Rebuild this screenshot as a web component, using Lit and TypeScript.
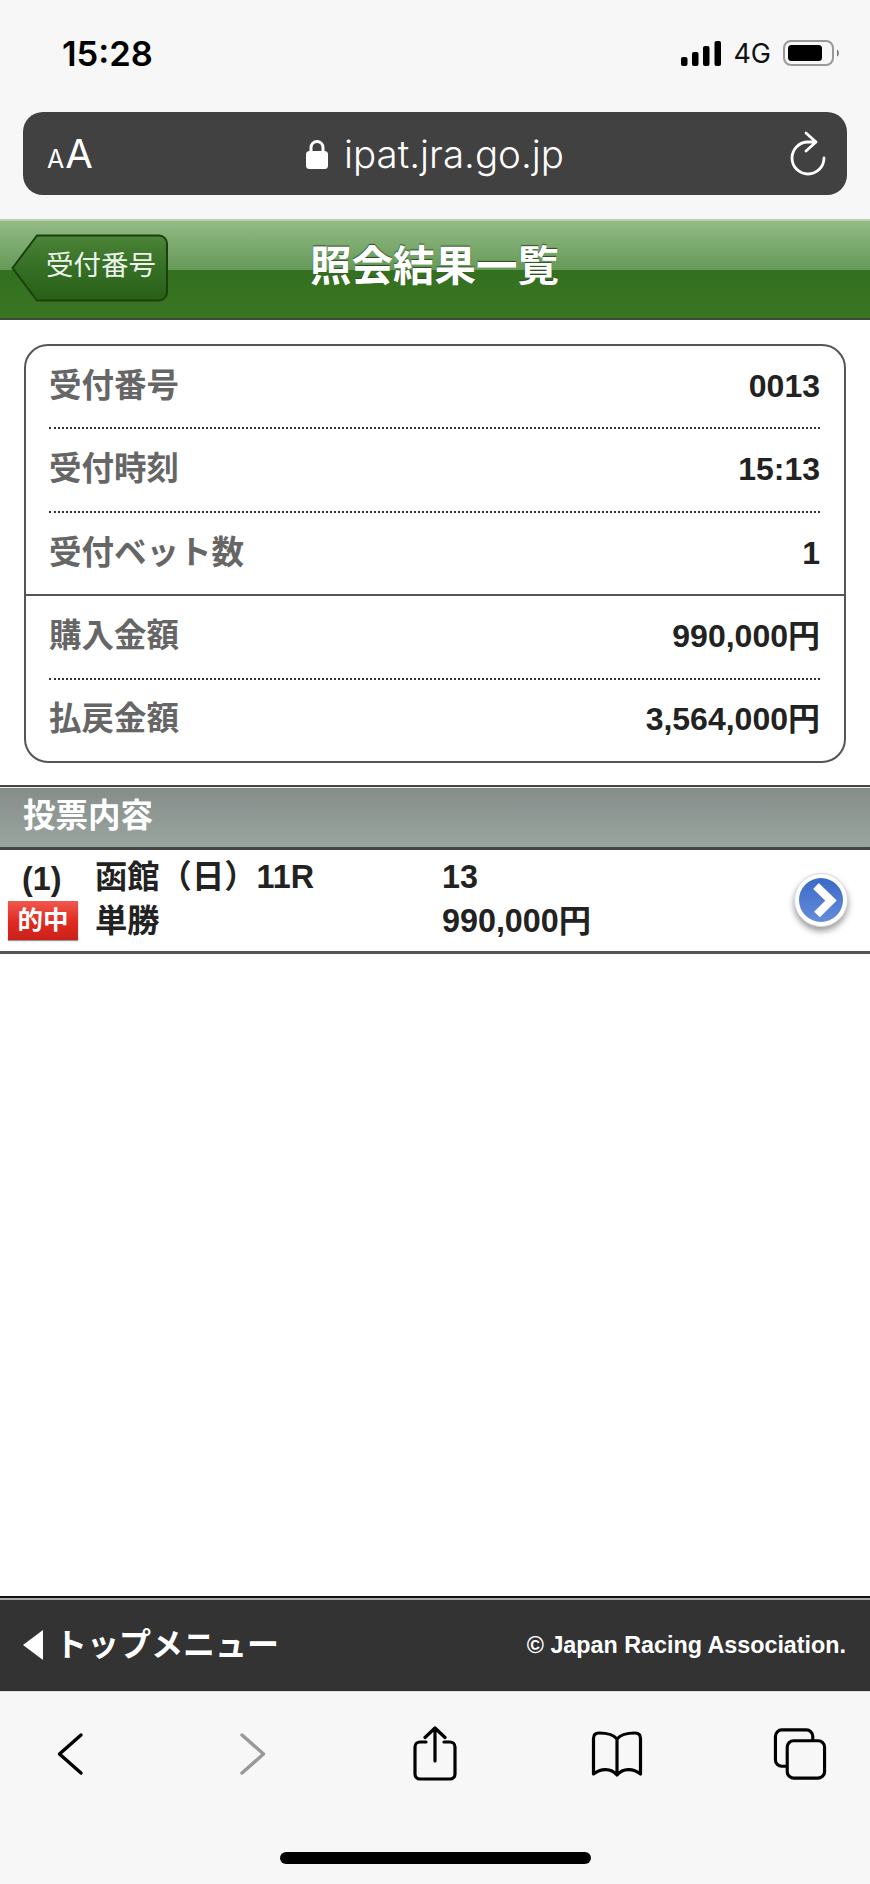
import { LitElement, css, html } from 'lit';
import { customElement } from 'lit/decorators.js';

const rows = [
  { label: '受付番号', value: '0013' },
  { label: '受付時刻', value: '15:13' },
  { label: '受付ベット数', value: '1', solid: true },
  { label: '購入金額', value: '990,000円' },
  { label: '払戻金額', value: '3,564,000円', last: true },
];

@customElement('app-root')
export class AppRoot extends LitElement {
  static styles = css`
    :host {
      display: flex;
      flex-direction: column;
      width: 870px;
      height: 1884px;
      background: #fff;
      overflow: hidden;
      font-family: 'Liberation Sans', 'Noto Sans CJK JP', sans-serif;
      color: #222;
    }

    .status {
      height: 112px;
      flex: none;
      background: #f7f7f7;
      display: flex;
      align-items: flex-start;
      justify-content: space-between;
      padding: 35px 30px 0 62px;
      box-sizing: border-box;
    }

    .time {
      font-family: Inter, sans-serif;
      font-size: 34.5px;
      font-weight: 600;
      line-height: 38px;
      color: #000;
    }

    .indicators {
      display: flex;
      align-items: center;
      gap: 12px;
      height: 38px;
      margin-top: -1px;
      font-family: Inter, sans-serif;
      font-size: 27px;
      color: #111;
    }

    .url-wrap {
      flex: none;
      height: 107px;
      background: #f7f7f7;
      padding: 0 23px;
      box-sizing: border-box;
    }

    .url {
      height: 83px;
      background: #414141;
      border-radius: 20px;
      display: flex;
      align-items: center;
      padding: 0 20px 0 24px;
      color: #fff;
    }

    .aa {
      width: 52px;
      flex: none;
      display: flex;
      align-items: baseline;
      gap: 1px;
      font-family: Inter, sans-serif;
      font-weight: 400;
      font-size: 40px;
      line-height: 1;
    }

    .aa small {
      font-size: 25px;
    }

    .lock {
      margin-left: 207px;
      flex: none;
    }

    .domain {
      margin-left: 16px;
      font-family: Inter, sans-serif;
      font-weight: 300;
      font-size: 38.5px;
      line-height: 44px;
    }

    .reload {
      margin-left: auto;
      margin-top: -2px;
      flex: none;
    }

    .nav {
      flex: none;
      height: 101px;
      box-sizing: border-box;
      border-top: 2px solid #bcd0b4;
      border-bottom: 2px solid #3c4a38;
      background: linear-gradient(#93bb86 0%, #669a59 50%, #33701f 50%, #3a7522 100%);
      display: flex;
      align-items: center;
      padding-left: 11px;
    }

    .back {
      position: relative;
      width: 158px;
      height: 68px;
      flex: none;
      margin-top: -3px;
      display: flex;
      align-items: center;
      justify-content: flex-end;
      padding-right: 13px;
      box-sizing: border-box;
      color: #eef3ec;
      font-size: 27.5px;
      line-height: 32px;
    }

    .back svg {
      position: absolute;
      inset: 0;
    }

    .back span {
      position: relative;
      margin-top: -4px;
    }

    .title {
      margin-left: 141px;
      margin-top: -6px;
      font-size: 41.5px;
      font-weight: 700;
      line-height: 50px;
      color: #fff;
      text-shadow: 0 -1px 1px #2c4a22;
    }

    .card {
      flex: none;
      margin: 24px 24px 22px;
      height: 419px;
      box-sizing: border-box;
      border: 2px solid #555;
      border-radius: 24px;
      display: flex;
      flex-direction: column;
    }

    .row {
      flex: 1;
      display: flex;
      align-items: center;
      justify-content: space-between;
      margin: 0 24px 0 23px;
      padding-bottom: 2px;
      border-bottom: 2px dotted #333;
      font-size: 32px;
      font-weight: 700;
      line-height: 40px;
    }

    .row .label {
      color: #666;
      font-size: 32.5px;
    }

    .row.solid {
      margin: 0;
      padding: 0 24px 2px 23px;
      border-bottom: 2px solid #555;
    }

    .row.last {
      border-bottom: 0;
    }

    .section {
      flex: none;
      height: 65px;
      box-sizing: border-box;
      border-top: 2px solid #444;
      border-bottom: 3px solid #444;
      box-shadow: inset 0 1px 0 #e8ecea;
      background: linear-gradient(#858d89, #9aa5a0);
      color: #fff;
      font-size: 32.5px;
      font-weight: 700;
      line-height: 59px;
      padding-left: 23px;
    }

    .bet {
      flex: none;
      height: 104px;
      box-sizing: border-box;
      border-bottom: 3px solid #555;
      display: flex;
      align-items: center;
      padding: 0 0 4px 8px;
      font-size: 32.3px;
      font-weight: 700;
      line-height: 44px;
    }

    .col-a {
      width: 87px;
      flex: none;
      display: flex;
      flex-direction: column;
      align-items: flex-start;
    }

    .index {
      padding-left: 14px;
    }

    .hit {
      width: 70px;
      height: 39px;
      background: linear-gradient(#f0584e, #e02a20 55%, #c9211a);
      color: #fff;
      font-size: 25.5px;
      line-height: 39px;
      text-align: center;
      box-shadow: 0 1px 1px #999;
    }

    .col-b {
      width: 347px;
      flex: none;
    }

    .col-c {
      flex: 1;
    }

    .go {
      flex: none;
      margin-right: 18px;
      margin-top: 14px;
      filter: drop-shadow(0 4px 3px rgba(0, 0, 0, 0.4));
    }

    .spacer {
      flex: 1;
    }

    .footer {
      flex: none;
      height: 95px;
      box-sizing: border-box;
      border-top: 2px solid #111;
      box-shadow: inset 0 2px 0 #aaa;
      background: #333;
      display: flex;
      align-items: center;
      justify-content: space-between;
      padding: 0 24px 0 23px;
      color: #fff;
      font-weight: 700;
    }

    .menu {
      display: flex;
      align-items: center;
      gap: 12px;
      font-size: 32px;
      line-height: 40px;
    }

    .copy {
      font-size: 23.3px;
      line-height: 30px;
    }

    .toolbar {
      flex: none;
      height: 193px;
      box-sizing: border-box;
      background: #f7f7f7;
      border-top: 1px solid #ddd;
      display: flex;
      flex-direction: column;
      align-items: center;
    }

    .tools {
      align-self: stretch;
      display: flex;
      justify-content: space-between;
      align-items: center;
      height: 123px;
      padding: 0 42px;
      box-sizing: border-box;
      margin-bottom: 37px;
    }

    .tool {
      width: 56px;
      display: flex;
      justify-content: center;
      flex: none;
    }

    .home {
      width: 311px;
      height: 12px;
      border-radius: 6px;
      background: #000;
    }
  `;

  render() {
    return html`
      <div class="status">
        <div class="time">15:28</div>
        <div class="indicators">
          <svg width="40" height="25" viewBox="0 0 40 25">
            <rect x="0" y="16" width="6.5" height="9" rx="2" fill="#000" />
            <rect x="11" y="11" width="6.5" height="14" rx="2" fill="#000" />
            <rect x="22" y="5" width="6.5" height="20" rx="2" fill="#000" />
            <rect x="33.5" y="0" width="6.5" height="25" rx="2" fill="#000" />
          </svg>
          <span>4G</span>
          <svg width="57" height="26" viewBox="0 0 57 26">
            <rect x="1" y="1" width="49" height="24" rx="7" fill="none" stroke="#999" stroke-width="2" />
            <rect x="5" y="5" width="34" height="16" rx="3.5" fill="#000" />
            <path d="M54 9.5c2.500 1 2.500 6 0 7z" fill="#777" />
          </svg>
        </div>
      </div>
      <div class="url-wrap">
        <div class="url">
          <div class="aa"><small>A</small>A</div>
          <svg class="lock" width="22" height="30" viewBox="0 0 22 30">
            <path d="M5 13V8.5a6 6 0 0 1 12 0V13" fill="none" stroke="#fff" stroke-width="3" />
            <rect x="0" y="12" width="22" height="18" rx="3.5" fill="#fff" />
          </svg>
          <div class="domain">ipat.jra.go.jp</div>
          <svg class="reload" width="38" height="46" viewBox="0 0 38 46">
            <path
              d="M27 12H19A16 16 0 1 0 35 28M17 3l10 9-10 9"
              fill="none"
              stroke="#fff"
              stroke-width="2.8"
              stroke-linecap="round"
              stroke-linejoin="round"
            />
          </svg>
        </div>
      </div>
      <div class="nav">
        <div class="back">
          <svg width="158" height="68" viewBox="0 0 158 68">
            <defs>
              <linearGradient id="bk" x1="0" y1="0" x2="0" y2="1">
                <stop offset="0" stop-color="#4c8438" />
                <stop offset="0.5" stop-color="#356f25" />
                <stop offset="1" stop-color="#285f16" />
              </linearGradient>
            </defs>
            <path
              d="M1.5 34 26 1.5h122a8 8 0 0 1 8 8v49a8 8 0 0 1-8 8H26z"
              fill="url(#bk)"
              stroke="#1b4010"
              stroke-width="2"
            />
          </svg>
          <span>受付番号</span>
        </div>
        <div class="title">照会結果一覧</div>
      </div>
      <div class="card">
        ${rows.map(
          (r) => html`
            <div class="row ${r.solid ? 'solid' : ''} ${r.last ? 'last' : ''}">
              <span class="label">${r.label}</span>
              <span>${r.value}</span>
            </div>
          `,
        )}
      </div>
      <div class="section">投票内容</div>
      <div class="bet">
        <div class="col-a">
          <span class="index">(1)</span>
          <span class="hit">的中</span>
        </div>
        <div class="col-b">
          <div>函館（日）11R</div>
          <div>単勝</div>
        </div>
        <div class="col-c">
          <div>13</div>
          <div>990,000円</div>
        </div>
        <svg class="go" width="62" height="68" viewBox="0 0 62 68">
          <defs>
            <linearGradient id="gb" x1="0" y1="0" x2="0" y2="1">
              <stop offset="0" stop-color="#3a6ac6" />
              <stop offset="1" stop-color="#648cdc" />
            </linearGradient>
          </defs>
          <circle cx="31" cy="28" r="26.5" fill="#fff" stroke="#d4d8de" stroke-width="1" />
          <circle cx="31" cy="28" r="22" fill="url(#gb)" />
          <path d="M26 14l15 14.500-14 14" fill="none" stroke="#fff" stroke-width="8" />
        </svg>
      </div>
      <div class="spacer"></div>
      <div class="footer">
        <div class="menu">
          <svg width="20" height="30" viewBox="0 0 20 30"><path d="M20 0v30L0 15z" fill="#fff" /></svg>
          <span>トップメニュー</span>
        </div>
        <div class="copy">© Japan Racing Association.</div>
      </div>
      <div class="toolbar">
        <div class="tools">
          <div class="tool">
            <svg width="28" height="44" viewBox="0 0 28 44">
              <path d="M25 3 3.500 22 25 41" fill="none" stroke="#000" stroke-width="3.400" stroke-linecap="round" stroke-linejoin="round" />
            </svg>
          </div>
          <div class="tool">
            <svg width="28" height="44" viewBox="0 0 28 44">
              <path d="M3 3l21.500 19L3 41" fill="none" stroke="#999" stroke-width="3.400" stroke-linecap="round" stroke-linejoin="round" />
            </svg>
          </div>
          <div class="tool">
            <svg width="46" height="56" viewBox="0 0 46 56">
              <path d="M14 16H8a5 5 0 0 0-5 5v27a5 5 0 0 0 5 5h30a5 5 0 0 0 5-5V21a5 5 0 0 0-5-5h-6" fill="none" stroke="#000" stroke-width="3.200" stroke-linecap="round" />
              <path d="M23 35V2M13 11.500 23 2l10 9.500" fill="none" stroke="#000" stroke-width="3.200" stroke-linecap="round" stroke-linejoin="round" />
            </svg>
          </div>
          <div class="tool">
            <svg width="53" height="46" viewBox="0 0 53 46">
              <path
                d="M26 8C23 4 17 2 8 2 4.500 2 2.500 4 2.500 7.500V43C10 37 20 37 26 44 32 37 42 37 49.500 43V7.500C49.500 4 47.500 2 44 2 35 2 29 4 26 8V44"
                fill="none"
                stroke="#000"
                stroke-width="3.200"
                stroke-linejoin="round"
              />
            </svg>
          </div>
          <div class="tool">
            <svg width="57" height="56" viewBox="0 0 57 56">
              <path d="M41.500 14V10a6.500 6.500 0 0 0-6.500-6.500H10A6.500 6.500 0 0 0 3.500 10v24a6.500 6.500 0 0 0 6.500 6.500h5.500" fill="none" stroke="#000" stroke-width="3.200" />
              <rect x="15.500" y="14.500" width="38" height="38" rx="6.500" fill="none" stroke="#000" stroke-width="3.200" />
            </svg>
          </div>
        </div>
        <div class="home"></div>
      </div>
    `;
  }
}
